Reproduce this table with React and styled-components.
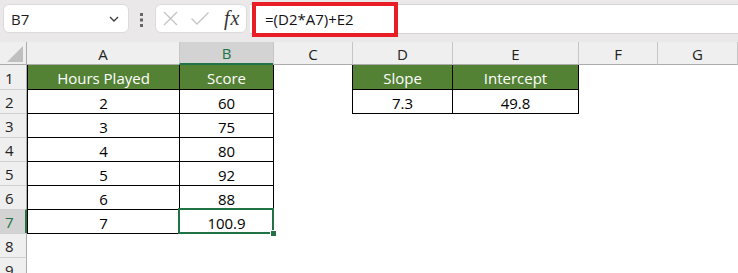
import React from 'react';
import styled, { createGlobalStyle, css } from 'styled-components';

const GREEN = '#217346';
const HEAD_GREEN = '#548235';

const Global = createGlobalStyle`
  html, body { margin: 0; padding: 0; background: #fff; overflow: hidden; }
  body { font-family: "Open Sans", "Noto Sans", sans-serif; }
`;

const Page = styled.div`
  width: 738px;
  height: 273px;
  overflow: hidden;
  display: flex;
  flex-direction: column;
`;

const TopBar = styled.div`
  height: 42px;
  flex: none;
  background: #ebe8ea;
  display: flex;
  align-items: flex-start;
  padding-top: 4px;
  box-sizing: border-box;
`;

const NameBox = styled.div`
  margin-left: 3px;
  width: 126px;
  height: 29px;
  box-sizing: border-box;
  background: #fff;
  border: 1px solid #dcdadb;
  border-radius: 6px;
  display: flex;
  align-items: center;
  justify-content: space-between;
  padding: 0 9px 0 7px;
  font-size: 15px;
  color: #1f1f1f;
`;

const Dots = styled.svg`
  margin-left: 11px;
  margin-top: 9px;
  flex: none;
`;

const FxBox = styled.div`
  margin-left: 12px;
  width: 92px;
  height: 29px;
  box-sizing: border-box;
  background: #fff;
  border: 1px solid #dcdadb;
  border-radius: 6px;
  display: flex;
  align-items: center;
  padding-left: 7px;
`;

const FxLabel = styled.span`
  font-family: "Liberation Serif", "DejaVu Serif", serif;
  font-style: italic;
  font-size: 20px;
  color: #333;
  letter-spacing: 1px;
  margin-left: 15px;
  line-height: 1;
  margin-top: -2px;
`;

const FormulaBar = styled.div`
  position: relative;
  flex: 1;
  margin-left: 3px;
  height: 30px;
  box-sizing: border-box;
  background: #fff;
  border-top: 1px solid #d6d3d5;
  border-bottom: 1px solid #d6d3d5;
  display: flex;
  align-items: center;
  padding-left: 15px;
  font-size: 15px;
  color: #111;
`;

const Highlight = styled.div`
  position: absolute;
  left: 2px;
  top: -3px;
  width: 146px;
  height: 35px;
  box-sizing: border-box;
  border: 4px solid #e81d25;
  pointer-events: none;
`;

const Sheet = styled.div`
  display: grid;
  grid-template-columns: 27px 152px 94px 79px 100px 126px 79px 80px 1fr;
  grid-template-rows: 23px;
  grid-auto-rows: 24px;
  background: #fff;
`;

const Corner = styled.div`
  background: #efefef;
  border-right: 1px solid #ababab;
  border-bottom: 1px solid #ababab;
  box-sizing: border-box;
  display: flex;
  align-items: flex-end;
  justify-content: flex-end;
  padding: 0 3px 2px 0;
`;

const ColHead = styled.div`
  background: ${p => (p.$selected ? '#d3d3d3' : '#efefef')};
  color: ${p => (p.$selected ? GREEN : '#222')};
  border-left: ${p => (p.$first ? 'none' : '1px solid #c6c6c6')};
  border-bottom: ${p => (p.$selected ? `2px solid ${GREEN}` : '1px solid #ababab')};
  box-sizing: border-box;
  display: flex;
  align-items: center;
  justify-content: center;
  font-size: 15px;
  padding-top: 1px;
`;

const RowHead = styled.div`
  background: ${p => (p.$selected ? '#d3d3d3' : '#efefef')};
  color: ${p => (p.$selected ? GREEN : '#222')};
  border-right: ${p => (p.$selected ? `2px solid ${GREEN}` : '1px solid #ababab')};
  border-top: ${p => (p.$first ? 'none' : '1px solid #d0d0d0')};
  box-sizing: border-box;
  display: flex;
  align-items: center;
  padding: 1px 0 0 5px;
  font-size: 15px;
`;

const Cell = styled.div`
  box-sizing: border-box;
  display: flex;
  align-items: center;
  justify-content: center;
  padding-top: 2px;
  font-size: 15px;
  color: #000;
  white-space: nowrap;
  ${p => p.$head && css`
    background: ${HEAD_GREEN};
    color: #fff;
  `}
  ${p => p.$boxed && css`
    border-left: 1px solid #000;
    border-top: ${p.$top ? 'none' : '1px solid #000'};
  `}
  ${p => {
    const s = [];
    if (p.$right) s.push('1px 0 0 #000');
    if (p.$bottom) s.push('0 1px 0 #000');
    if (p.$right && p.$bottom) s.push('1px 1px 0 #000');
    return s.length ? css`box-shadow: ${s.join(', ')};` : '';
  }}
  ${p => p.$selected && css`
    position: relative;
    z-index: 2;
    outline: 2px solid ${GREEN};
    outline-offset: -1px;
    &::after {
      content: '';
      position: absolute;
      right: -3px;
      bottom: -3px;
      width: 5px;
      height: 5px;
      background: ${GREEN};
      box-shadow: 0 0 0 1px #fff;
    }
  `}
`;

const COLS = ['A', 'B', 'C', 'D', 'E', 'F', 'G'];

const tableCell = (r, c) => {
  // returns props for table cell at row r (1-based), col index c (0=A)
  const inT1 = r >= 1 && r <= 7 && (c === 0 || c === 1);
  const inT2 = r >= 1 && r <= 2 && (c === 3 || c === 4);
  if (inT1) return { $boxed: true, $top: r === 1, $head: r === 1, $right: c === 1, $bottom: r === 7 };
  if (inT2) return { $boxed: true, $top: r === 1, $head: r === 1, $right: c === 4, $bottom: r === 2 };
  return {};
};

const DATA = {
  1: ['Hours Played', 'Score', '', 'Slope', 'Intercept'],
  2: ['2', '60', '', '7.3', '49.8'],
  3: ['3', '75'],
  4: ['4', '80'],
  5: ['5', '92'],
  6: ['6', '88'],
  7: ['7', '100.9'],
};

export default function App() {
  const rows = [1, 2, 3, 4, 5, 6, 7, 8, 9];
  return (
    <Page>
      <Global />
      <TopBar>
        <NameBox>
          <span>B7</span>
          <svg width="10" height="6" viewBox="0 0 10 6">
            <path d="M1 1 L5 5 L9 1" fill="none" stroke="#3a3a3a" strokeWidth="1.3" />
          </svg>
        </NameBox>
        <Dots width="3" height="14" viewBox="0 0 3 14">
          <rect x="0" y="0" width="3" height="3" fill="#666" />
          <rect x="0" y="5.5" width="3" height="3" fill="#666" />
          <rect x="0" y="11" width="3" height="3" fill="#666" />
        </Dots>
        <FxBox>
          <svg width="15" height="15" viewBox="0 0 15 15">
            <path d="M1 1 L14 14 M14 1 L1 14" stroke="#c3c3c3" strokeWidth="1.3" fill="none" />
          </svg>
          <svg width="18" height="13" viewBox="0 0 18 13" style={{ marginLeft: 13 }}>
            <path d="M0.5 6.5 L6 12 L17.5 0.5" stroke="#c3c3c3" strokeWidth="1.3" fill="none" />
          </svg>
          <FxLabel>fx</FxLabel>
        </FxBox>
        <FormulaBar>
          =(D2*A7)+E2
          <Highlight />
        </FormulaBar>
      </TopBar>
      <Sheet>
        <Corner>
          <svg width="16" height="16" viewBox="0 0 16 16">
            <path d="M16 0 L16 16 L0 16 Z" fill="#bfbfbf" />
          </svg>
        </Corner>
        {COLS.map((c, i) => (
          <ColHead key={c} $first={i === 0} $selected={c === 'B'}>{c}</ColHead>
        ))}
        <ColHead />
        {rows.map(r => (
          <React.Fragment key={r}>
            <RowHead $first={r === 1} $selected={r === 7}>{r}</RowHead>
            {COLS.map((c, i) => (
              <Cell
                key={c}
                {...tableCell(r, i)}
                $selected={r === 7 && c === 'B'}
              >
                {(DATA[r] && DATA[r][i]) || ''}
              </Cell>
            ))}
            <Cell />
          </React.Fragment>
        ))}
      </Sheet>
    </Page>
  );
}
